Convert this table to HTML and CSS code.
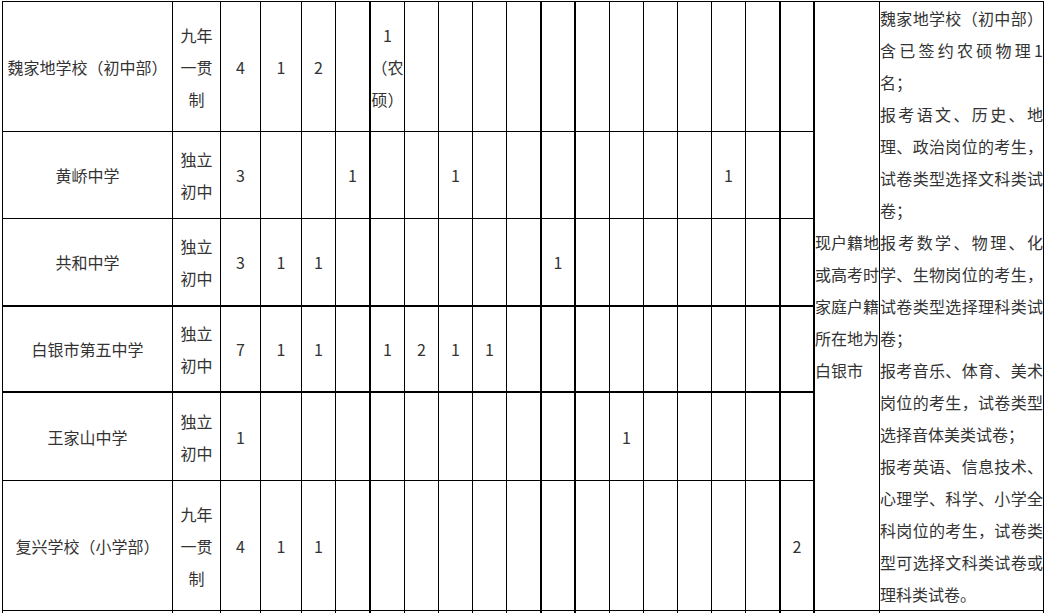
FILE: index.html
```html
<!DOCTYPE html>
<html lang="zh-CN">
<head>
<meta charset="utf-8">
<title>岗位表</title>
<link rel="stylesheet" href="styles.css">
</head>
<body>
<div class="sheet">
  <!-- row 1 -->
  <div class="c">魏家地学校（初中部）</div>
  <div class="c">九年一贯制</div>
  <div class="c">4</div>
  <div class="c">1</div>
  <div class="c">2</div>
  <div class="c tr"></div>
  <div class="c">1（农硕）</div>
  <div class="c"></div>
  <div class="c"></div>
  <div class="c"></div>
  <div class="c tr"></div>
  <div class="c tr"></div>
  <div class="c"></div>
  <div class="c"></div>
  <div class="c"></div>
  <div class="c"></div>
  <div class="c"></div>
  <div class="c tr"></div>
  <div class="c tr"></div>
  <div class="c merged region">现户籍地或高考时家庭户籍所在地为白银市</div>
  <div class="c merged notes">
    <div class="para">魏家地学校（初中部）含已签约农硕物理1名；</div>
    <div class="para">报考语文、历史、地理、政治岗位的考生，试卷类型选择文科类试卷；</div>
    <div class="para">报考数学、物理、化学、生物岗位的考生，试卷类型选择理科类试卷；</div>
    <div class="para">报考音乐、体育、美术岗位的考生，试卷类型选择音体美类试卷；</div>
    <div class="para">报考英语、信息技术、心理学、科学、小学全科岗位的考生，试卷类型可选择文科类试卷或理科类试卷。</div>
  </div>

  <!-- row 2 -->
  <div class="c">黄峤中学</div>
  <div class="c">独立初中</div>
  <div class="c">3</div>
  <div class="c"></div>
  <div class="c"></div>
  <div class="c tr">1</div>
  <div class="c"></div>
  <div class="c"></div>
  <div class="c">1</div>
  <div class="c"></div>
  <div class="c tr"></div>
  <div class="c tr"></div>
  <div class="c"></div>
  <div class="c"></div>
  <div class="c"></div>
  <div class="c"></div>
  <div class="c">1</div>
  <div class="c tr"></div>
  <div class="c tr"></div>

  <!-- row 3 -->
  <div class="c tb">共和中学</div>
  <div class="c tb">独立初中</div>
  <div class="c tb">3</div>
  <div class="c tb">1</div>
  <div class="c tb">1</div>
  <div class="c tb tr"></div>
  <div class="c tb"></div>
  <div class="c tb"></div>
  <div class="c tb"></div>
  <div class="c tb"></div>
  <div class="c tb tr"></div>
  <div class="c tb tr">1</div>
  <div class="c tb"></div>
  <div class="c tb"></div>
  <div class="c tb"></div>
  <div class="c tb"></div>
  <div class="c tb"></div>
  <div class="c tb tr"></div>
  <div class="c tb tr"></div>

  <!-- row 4 -->
  <div class="c tb">白银市第五中学</div>
  <div class="c tb">独立初中</div>
  <div class="c tb">7</div>
  <div class="c tb">1</div>
  <div class="c tb">1</div>
  <div class="c tb tr"></div>
  <div class="c tb">1</div>
  <div class="c tb">2</div>
  <div class="c tb">1</div>
  <div class="c tb">1</div>
  <div class="c tb tr"></div>
  <div class="c tb tr"></div>
  <div class="c tb"></div>
  <div class="c tb"></div>
  <div class="c tb"></div>
  <div class="c tb"></div>
  <div class="c tb"></div>
  <div class="c tb tr"></div>
  <div class="c tb tr"></div>

  <!-- row 5 -->
  <div class="c">王家山中学</div>
  <div class="c">独立初中</div>
  <div class="c">1</div>
  <div class="c"></div>
  <div class="c"></div>
  <div class="c tr"></div>
  <div class="c"></div>
  <div class="c"></div>
  <div class="c"></div>
  <div class="c"></div>
  <div class="c tr"></div>
  <div class="c tr"></div>
  <div class="c"></div>
  <div class="c">1</div>
  <div class="c"></div>
  <div class="c"></div>
  <div class="c"></div>
  <div class="c tr"></div>
  <div class="c tr"></div>

  <!-- row 6 -->
  <div class="c">复兴学校（小学部）</div>
  <div class="c">九年一贯制</div>
  <div class="c">4</div>
  <div class="c">1</div>
  <div class="c">1</div>
  <div class="c tr"></div>
  <div class="c"></div>
  <div class="c"></div>
  <div class="c"></div>
  <div class="c"></div>
  <div class="c tr"></div>
  <div class="c tr"></div>
  <div class="c"></div>
  <div class="c"></div>
  <div class="c"></div>
  <div class="c"></div>
  <div class="c"></div>
  <div class="c tr"></div>
  <div class="c tr">2</div>

  <!-- row 7 (partially visible) -->
  <div class="c"></div>
  <div class="c"></div>
  <div class="c"></div>
  <div class="c"></div>
  <div class="c"></div>
  <div class="c tr"></div>
  <div class="c"></div>
  <div class="c"></div>
  <div class="c"></div>
  <div class="c"></div>
  <div class="c tr"></div>
  <div class="c tr"></div>
  <div class="c"></div>
  <div class="c"></div>
  <div class="c"></div>
  <div class="c"></div>
  <div class="c"></div>
  <div class="c tr"></div>
  <div class="c tr"></div>
  <div class="c"></div>
  <div class="c"></div>
</div>
</body>
</html>
```
FILE: styles.css
```css
html, body {
  margin: 0;
  padding: 0;
  background: #ffffff;
  overflow: hidden;
}

body {
  font-family: "Noto Sans CJK SC", "Noto Sans", sans-serif;
  font-size: 16px;
  line-height: 32px;
  color: #333333;
}

.sheet {
  display: grid;
  grid-template-columns:
    170px 48px 40px 41px 34px 35px
    34px 34px 34px 34px 35px
    34px 34px 34px 34px 34px 34px 35px
    34px 65px 164px;
  grid-template-rows: 130px 87px 88px 86px 88px 130px 40px;
  margin: 1px 0 0 2px;
  width: max-content;
  border-top: 1px solid #000;
  border-left: 1px solid #000;
}

.c {
  box-sizing: border-box;
  border-right: 1px solid #000;
  border-bottom: 1px solid #000;
  display: flex;
  align-items: center;
  justify-content: center;
  text-align: center;
  overflow: hidden;
  text-spacing-trim: space-all;
  line-break: strict;
}

.tr {
  border-right-width: 2px;
}

.tb {
  border-bottom-width: 2px;
}

.merged {
  grid-row: span 6;
}

.region {
  justify-content: flex-start;
  text-align: left;
}

.notes {
  display: flex;
  flex-direction: column;
  justify-content: center;
  align-items: stretch;
  text-align: justify;
}

.para {
  text-align: justify;
  text-align-last: left;
}
```
